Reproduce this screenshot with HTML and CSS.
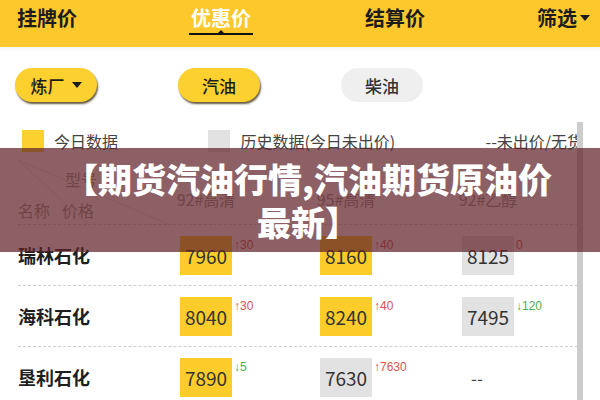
FILE: index.html
```html
<!DOCTYPE html>
<html lang="zh-CN">
<head>
    <meta charset="UTF-8">
    <meta name="viewport" content="width=device-width, initial-scale=1.0">
    <title>优惠价</title>
    <link rel="stylesheet" href="styles.css">
</head>
<body>
    <div class="page">
        <header class="tabs">
            <span class="tab">挂牌价</span>
            <span class="tab active">优惠价</span>
            <span class="tab">结算价</span>
            <span class="tab">筛选<i class="caret"></i></span>
        </header>

        <div class="pills">
            <span class="pill on">炼厂<i class="caret"></i></span>
            <span class="pill on">汽油</span>
            <span class="pill">柴油</span>
        </div>

        <div class="sheet">
            <div class="legend">
                <span class="key"><i class="swatch today"></i>今日数据</span>
                <span class="key"><i class="swatch history"></i>历史数据(今日未出价)</span>
                <span class="key">--未出价/无货</span>
            </div>

            <div class="thead">
                <div class="corner">
                    <svg class="split" width="162" height="64" viewBox="0 0 162 64">
                        <line x1="0" y1="0" x2="150" y2="64" stroke="#e4e4e4" stroke-width="1"/>
                        <line x1="0" y1="0" x2="70" y2="64" stroke="#e4e4e4" stroke-width="1"/>
                    </svg>
                    <span class="model">型号</span>
                    <span class="names"><span>名称</span><span>价格</span></span>
                </div>
                <div class="col-title"><span>92#高清</span></div>
                <div class="col-title"><span>95#高清</span></div>
                <div class="col-title"><span>92#乙醇</span></div>
            </div>

            <div class="row">
                <span class="name">瑞林石化</span>
                <div class="cell"><span class="price today">7960</span><span class="chg up">↑30</span></div>
                <div class="cell"><span class="price today">8160</span><span class="chg up">↑40</span></div>
                <div class="cell"><span class="price history">8125</span><span class="chg up">0</span></div>
            </div>
            <div class="row">
                <span class="name">海科石化</span>
                <div class="cell"><span class="price today">8040</span><span class="chg up">↑30</span></div>
                <div class="cell"><span class="price today">8240</span><span class="chg up">↑40</span></div>
                <div class="cell"><span class="price history">7495</span><span class="chg down">↓120</span></div>
            </div>
            <div class="row">
                <span class="name">垦利石化</span>
                <div class="cell"><span class="price today">7890</span><span class="chg down">↓5</span></div>
                <div class="cell"><span class="price history">7630</span><span class="chg up">↑7630</span></div>
                <div class="cell"><span class="empty">--</span></div>
            </div>

            <div class="scrollbar"></div>
        </div>

        <div class="banner">
            <h1>【期货汽油行情,汽油期货原油价<br>最新】</h1>
        </div>
    </div>
</body>
</html>
```

FILE: styles.css
```css
body {
    margin: 0;
    font-family: "Noto Sans CJK SC", "Noto Sans", sans-serif;
    color: #222;
    background: #fff;
}

.page {
    position: relative;
    width: 600px;
    height: 400px;
    overflow: hidden;
}

/* top tab bar */
.tabs {
    height: 47px;
    box-sizing: border-box;
    padding: 4px 10px 0 17px;
    display: flex;
    justify-content: space-between;
    align-items: flex-start;
    background: #fcc82c;
    box-shadow: 0 2px 4px rgba(0, 0, 0, 0.05);
}

.tab {
    position: relative;
    font-size: 20px;
    font-weight: bold;
    line-height: 28px;
    color: #1c1c1c;
    display: flex;
    align-items: center;
}

.tab.active {
    color: #fff;
    padding: 0 2px 1px;
    border-bottom: 2px solid #111;
}

.tab.active::after {
    content: "";
    position: absolute;
    left: 50%;
    bottom: 0;
    margin-left: -3px;
    border: 3px solid transparent;
    border-bottom-color: #111;
}

.caret {
    display: inline-block;
    width: 0;
    height: 0;
    margin-left: 3px;
    border-left: 5px solid transparent;
    border-right: 5px solid transparent;
    border-top: 6px solid #1c1c1c;
}

/* fuel / refinery filter pills */
.pills {
    display: flex;
    gap: 81px;
    padding: 21px 0 0 15px;
}

.pill {
    width: 82px;
    height: 34px;
    border-radius: 17px;
    display: flex;
    justify-content: center;
    align-items: center;
    font-size: 17px;
    font-weight: 500;
    background: #efefef;
    color: #333;
}

.pill.on {
    background: #fcd02f;
    color: #1c1c1c;
    box-shadow: 1px 2px 2px rgba(50, 35, 0, 0.75);
}

.pill .caret {
    margin-left: 7px;
}

/* price sheet */
.sheet {
    position: relative;
    padding: 28px 17px 0 18px;
}

.legend {
    display: flex;
    justify-content: space-between;
    padding-left: 4px;
    font-size: 16px;
    line-height: 22px;
    color: #444;
}

.key {
    display: flex;
    align-items: center;
}

.swatch {
    width: 22px;
    height: 22px;
    margin-right: 10px;
}

.swatch.today {
    background: #fcd02f;
}

.swatch.history {
    background: #e2e2e2;
}

.thead,
.row {
    display: grid;
    grid-template-columns: 162px 140px 142px 1fr;
}

.thead {
    margin-top: 8px;
    height: 64px;
    border-bottom: 1px dashed #cfcfcf;
    color: #9a9a9a;
    font-size: 16px;
    line-height: 22px;
}

.corner {
    position: relative;
    display: flex;
    flex-direction: column;
    justify-content: space-between;
    padding: 8px 0 3px;
}

.split {
    position: absolute;
    left: 0;
    top: 0;
}

.model {
    padding-left: 47px;
}

.names {
    display: flex;
    gap: 12px;
}

.col-title {
    width: 52px;
    padding-top: 28px;
    display: flex;
    justify-content: center;
    white-space: nowrap;
}

.row {
    height: 60px;
    align-items: center;
    border-bottom: 1px dashed #cfcfcf;
}

.name {
    font-size: 18px;
    font-weight: bold;
    color: #1e1e1e;
}

.cell {
    display: flex;
    align-items: flex-start;
}

.price {
    width: 52px;
    height: 39px;
    display: flex;
    justify-content: center;
    align-items: center;
    font-size: 19px;
    color: #333;
}

.price.today {
    background: #fccd2a;
}

.price.history {
    background: #e2e2e2;
}

.chg {
    margin: 2px 0 0 2px;
    font-family: "Liberation Sans", "Noto Sans", sans-serif;
    font-size: 12px;
    line-height: 14px;
}

.chg.up {
    color: #d9534f;
}

.chg.down {
    color: #4cae4c;
}

.empty {
    width: 30px;
    line-height: 39px;
    text-align: center;
    font-size: 17px;
    color: #444;
}

.scrollbar {
    position: absolute;
    top: 20px;
    right: 17px;
    width: 6px;
    height: 300px;
    background: #cdcdcd;
}

/* headline strip across the middle */
.banner {
    position: absolute;
    left: 0;
    right: 0;
    top: 148px;
    height: 104px;
    display: flex;
    justify-content: center;
    align-items: center;
    background: rgba(95, 35, 40, 0.72);
}

.banner h1 {
    margin: 0;
    padding-left: 16px;
    font-size: 34px;
    font-weight: 900;
    line-height: 43px;
    text-align: center;
    color: #fff;
}
```
